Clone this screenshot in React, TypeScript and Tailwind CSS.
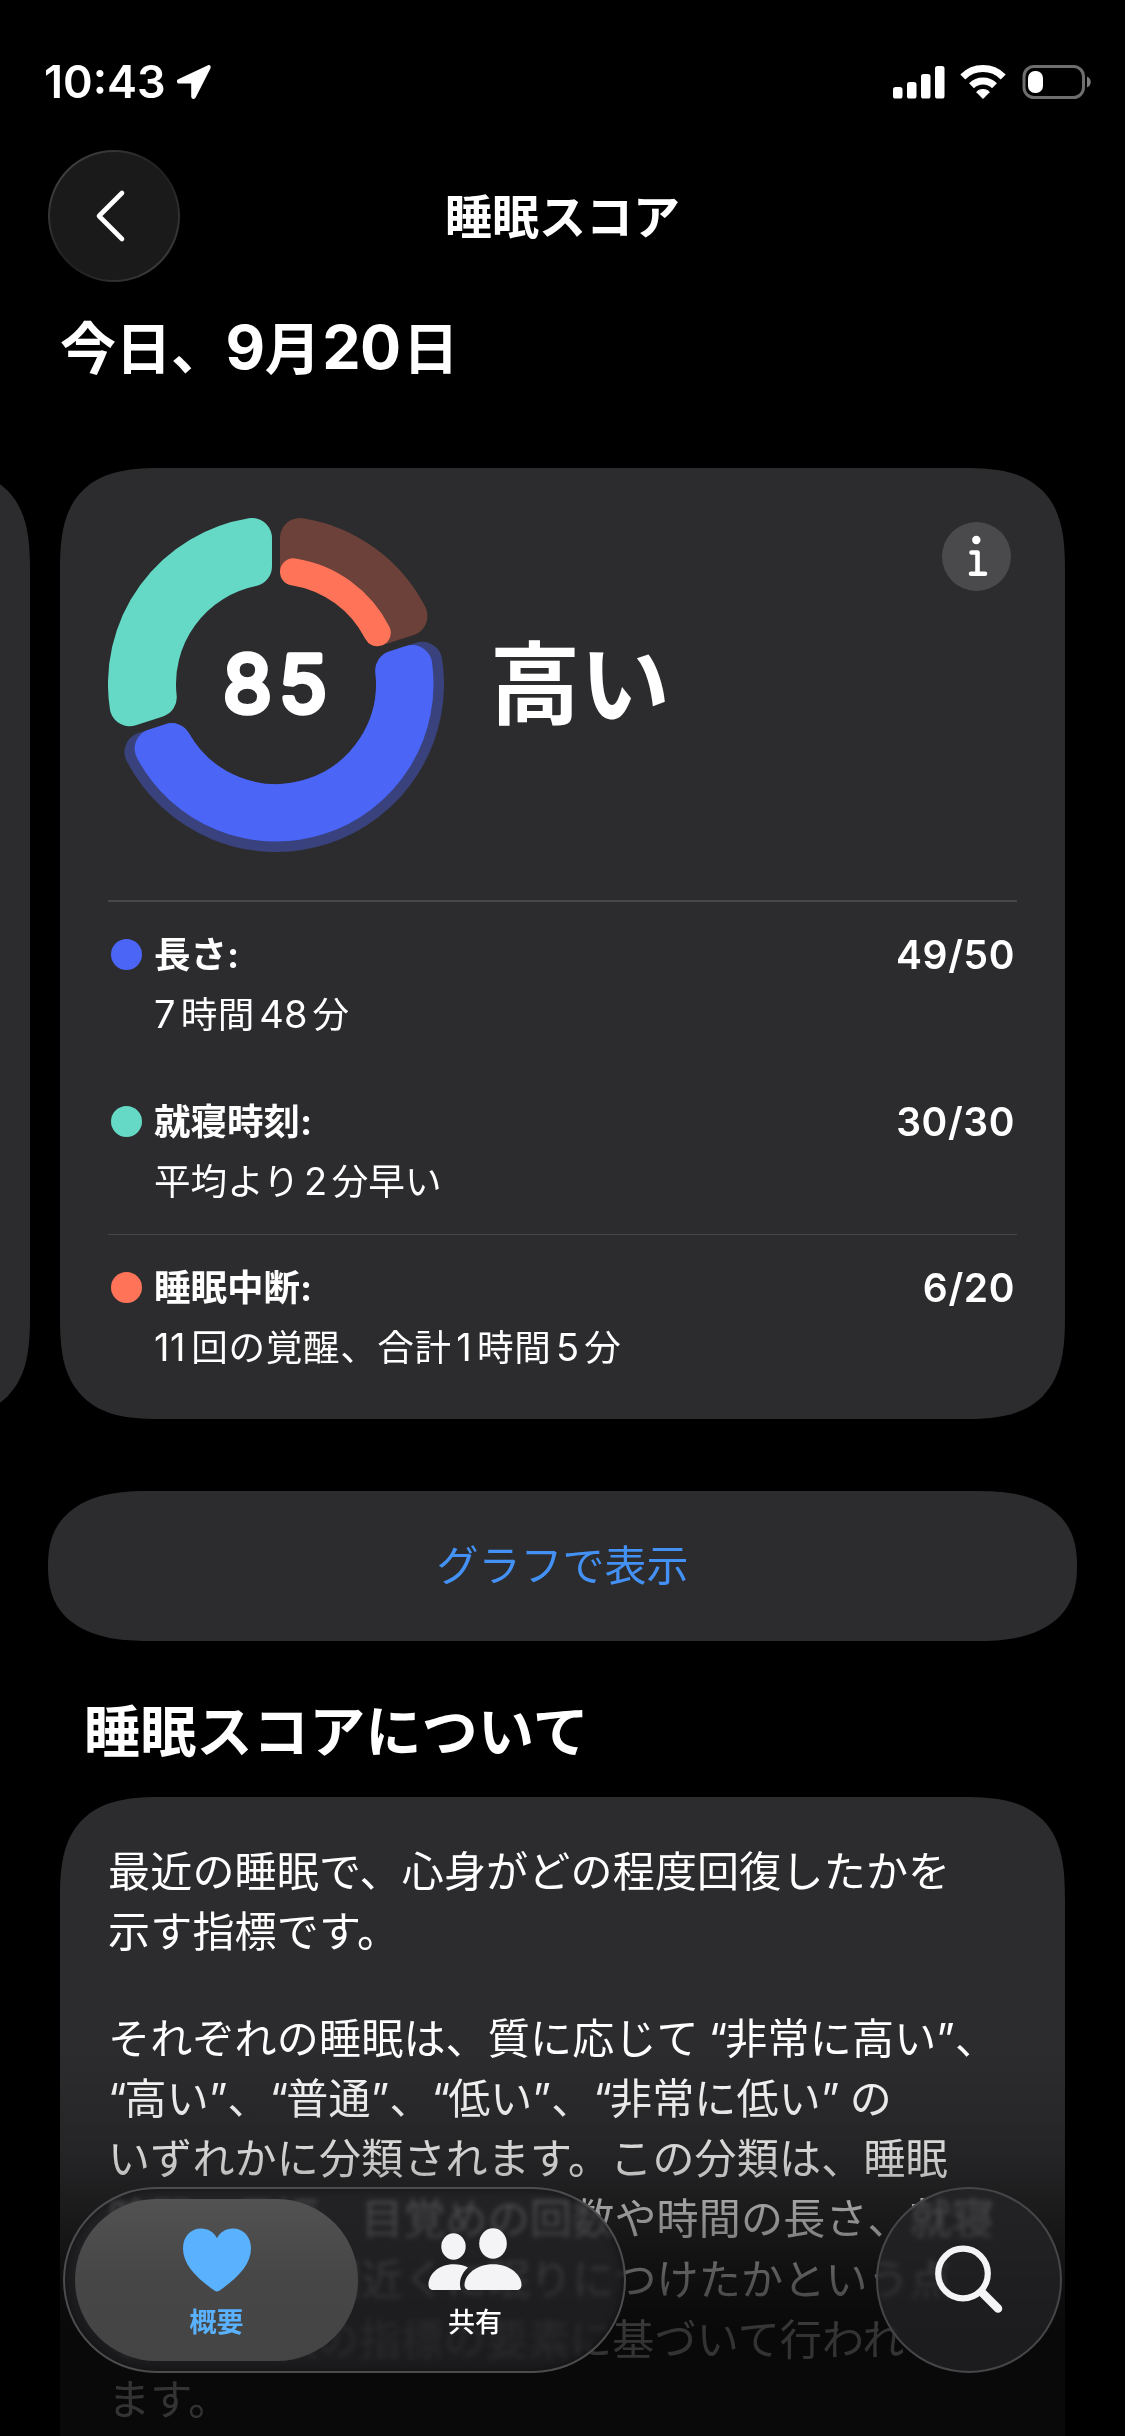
import type { ReactNode } from 'react';

const METRICS = [
  { color: 'bg-[#4b66f7]', title: '長さ:', score: '49/50', detail: <><Num first>7</Num>時間<Num>48</Num>分</> },
  { color: 'bg-[#65d9c5]', title: '就寝時刻:', score: '30/30', detail: <span className="tracking-normal">平均より<Num>2</Num>分早い</span> },
  { color: 'bg-[#ff7459]', title: '睡眠中断:', score: '6/20', detail: <span className="tracking-[0.65px]"><Num first>11</Num>回の覚醒、合計<Num>1</Num>時間<Num>5</Num>分</span> },
];

export default function App() {
  return (
    <div
      lang="ja"
      className="relative flex h-[2436px] w-[1125px] flex-col overflow-hidden bg-black font-['Inter','Noto_Sans_CJK_JP',sans-serif] text-white"
    >
      <StatusBar />
      <NavBar />
      <h2 className="mt-[29px] h-[72px] pl-[60px] text-[56px] leading-[72px] font-bold tracking-[-0.5px] whitespace-nowrap">
        今日、<span className="-ml-px text-[61px]">9</span>月<span className="mx-[2px] text-[61px]">20</span>日
      </h2>
      <Carousel />
      <button
        type="button"
        className="mx-[48px] mt-[72px] h-[150px] shrink-0 rounded-[75px] bg-[#2c2c2e] text-[42px] leading-[60px] text-[#4391f4] supports-[corner-shape:squircle]:rounded-[100px/75px] supports-[corner-shape:squircle]:[corner-shape:superellipse(1.3)]"
      >
        グラフで表示
      </button>
      <h2 className="mt-[55px] h-[72px] shrink-0 pl-[84px] text-[56px] leading-[72px] font-bold tracking-[0.3px]">睡眠スコアについて</h2>
      <About />
      <div className="absolute inset-x-0 top-[2050px] h-[386px] bg-[linear-gradient(to_bottom,transparent,rgba(0,0,0,0.17)_26%,rgba(0,0,0,0.43)_44%,rgba(0,0,0,0.67)_60%,rgba(0,0,0,0.8)_73%,rgba(0,0,0,0.8))]" />
      <TabBar />
    </div>
  );
}

function StatusBar() {
  return (
    <header className="flex h-[132px] shrink-0 items-start justify-between pt-[64px] pr-[33px] pl-[44px]">
      <div className="flex h-[36px] items-center gap-[11px]">
        <span className="w-[121px] text-[45px] leading-[36px] font-semibold">10:43</span>
        <svg width="36" height="36" viewBox="0 0 36 36" fill="white">
          <path d="M31.500 1.400 2.200 15.200C.2 16.200.7 19.500 3 19.500H15.200V32.400C15.200 35.200 18.600 35.800 19.700 33.500L34.400 4.400C35.500 2.200 33.700.4 31.500 1.400Z" />
        </svg>
      </div>
      <div className="flex h-[36px] items-center">
        <svg width="200" height="36" viewBox="892 64 200 36">
          <g fill="white">
            <rect x="893" y="87" width="9.500" height="11.500" rx="2.600" />
            <rect x="907" y="82" width="9.500" height="16.500" rx="2.600" />
            <rect x="921" y="74" width="9.500" height="24.500" rx="2.600" />
            <rect x="935" y="66" width="9.500" height="32.500" rx="2.600" />
            <path d="M983 98.500 976.600 92C979.800 88.600 986.200 88.600 989.400 92Z" stroke="white" strokeWidth="1" strokeLinejoin="round" />
          </g>
          <g fill="none" stroke="white" strokeWidth="7">
            <path d="M971.500 85.700A16.400 16.400 0 0 1 994.500 85.700" />
            <path d="M962.800 77A28.500 28.500 0 0 1 1003.200 77" />
          </g>
          <rect x="1024" y="66.500" width="59.500" height="31" rx="10" fill="none" stroke="#6e6e6e" strokeWidth="3" />
          <rect x="1028" y="71" width="15" height="22" rx="7" fill="white" />
          <path d="M1087 76.500C1092 78.500 1092 85.500 1087 87.500Z" fill="#7d7d7d" />
        </svg>
      </div>
    </header>
  );
}

function NavBar() {
  return (
    <nav className="mt-[18px] grid h-[132px] shrink-0 grid-cols-[132px_1fr_132px] items-center px-[48px]">
      <button
        type="button"
        aria-label="戻る"
        className="flex size-[132px] items-center justify-center rounded-full bg-[linear-gradient(135deg,#4a4a4a,#242424_45%,#202020_55%,#454545)] p-[2px]"
      >
        <span className="flex size-full items-center justify-center rounded-full bg-[#1a1a1a]">
          <svg width="40" height="60" viewBox="0 0 40 60" className="mr-[9px]" fill="none" stroke="white" strokeWidth="4.600" strokeLinecap="round" strokeLinejoin="round">
            <path d="M32 7 9 30 32 53" />
          </svg>
        </span>
      </button>
      <h1 className="pt-px text-center text-[47px] leading-[60px] font-bold">睡眠スコア</h1>
    </nav>
  );
}

function Carousel() {
  return (
    <div className="mt-[85px] -ml-[975px] flex h-[951px] w-[2040px] shrink-0 gap-[30px]">
      <section className="h-full w-[1005px] shrink-0 rounded-[76px] bg-[#2c2c2e] supports-[corner-shape:squircle]:rounded-[104px] supports-[corner-shape:squircle]:[corner-shape:superellipse(1.5)]" />
      <section className="flex h-full w-[1005px] shrink-0 flex-col rounded-[76px] bg-[#2c2c2e] px-[48px] supports-[corner-shape:squircle]:rounded-[104px] supports-[corner-shape:squircle]:[corner-shape:superellipse(1.5)]">
        <div className="flex h-[432px] shrink-0">
          <ScoreRing />
          <div className="flex flex-1 items-center pt-[2px] pl-[46px] text-[90px] leading-[100px] font-bold">高い</div>
          <InfoButton />
        </div>
        <div className="h-[2px] shrink-0 bg-[#47474a]" />
        <div className="flex h-[332px] shrink-0 flex-col">
          <MetricRow {...METRICS[0]} />
          <div className="h-[32px] shrink-0" />
          <MetricRow {...METRICS[1]} />
        </div>
        <div className="h-px shrink-0 bg-[#47474a]" />
        <MetricRow {...METRICS[2]} />
      </section>
    </div>
  );
}

function MetricRow({ color, title, score, detail }: { color: string; title: string; score: string; detail: ReactNode }) {
  return (
    <div className="flex shrink-0 items-start pt-[29px] pl-[3px]">
      <span className={`mt-[8px] mr-[12px] size-[31px] rounded-full ${color}`} />
      <div className="flex-1">
        <div className="h-[48px] text-[36.500px] leading-[48px] font-bold">{title}</div>
        <div className="mt-[11px] h-[47px] text-[36.600px] leading-[48px] tracking-[0.35px] whitespace-nowrap">{detail}</div>
      </div>
      <span className="mr-[2px] text-[39px] leading-[48px] font-semibold tracking-[0.6px]">{score}</span>
    </div>
  );
}

function Num({ children, first = false }: { children: ReactNode; first?: boolean }) {
  return <span className={first ? 'mr-[5px] text-[38px]' : 'mx-[4.500px] text-[38px]'}>{children}</span>;
}

function InfoButton() {
  return (
    <button type="button" aria-label="情報" className="mt-[54px] mr-[6px] flex size-[69px] items-center justify-center rounded-full bg-[#4a4a4c]">
      <svg width="69" height="69" viewBox="0 0 69 69" fill="none" stroke="white" strokeWidth="4.600" strokeLinecap="round" strokeLinejoin="round">
        <circle cx="34.300" cy="18" r="4.200" fill="white" stroke="none" />
        <path d="M29.500 30.500H35.500V51.500M29 51.700H43" />
      </svg>
    </button>
  );
}

interface Segment {
  from: number;
  to: number;
  inner: number;
  outer: number;
  corner: number;
  color: string;
}

const SEGMENTS: Segment[] = [
  { from: 0, to: 72, inner: 100, outer: 168, corner: 20, color: '#6b4139' },
  { from: 0, to: 72, inner: 100, outer: 127, corner: 13.4, color: '#ff7459' },
  { from: 72, to: 252, inner: 100, outer: 168, corner: 20, color: '#39427c' },
  { from: 72, to: 252, inner: 100, outer: 157.5, corner: 20, color: '#4b66f7' },
  { from: 252, to: 360, inner: 100, outer: 168, corner: 20, color: '#65d9c5' },
];

// The outline is inset by the corner radius; a round-joined stroke grows it back.
function segmentPath({ from, to, inner, outer, corner }: Segment) {
  const offset = 4 + corner;
  const rOut = outer - corner;
  const rIn = inner + corner;
  const point = (r: number, deg: number, sign: number) => {
    const a = (deg * Math.PI) / 180 + sign * Math.asin(offset / r);
    return `${(168 + r * Math.sin(a)).toFixed(2)} ${(168 - r * Math.cos(a)).toFixed(2)}`;
  };
  return [
    `M${point(rOut, from, 1)}`,
    `A${rOut} ${rOut} 0 0 1 ${point(rOut, to, -1)}`,
    `L${point(rIn, to, -1)}`,
    `A${rIn} ${rIn} 0 0 0 ${point(rIn, from, 1)}`,
    'Z',
  ].join('');
}

function ScoreRing() {
  return (
    <svg width="336" height="336" viewBox="0 0 336 336" className="mt-[48px] shrink-0">
      {SEGMENTS.map((segment) => (
        <path
          key={segment.color}
          d={segmentPath(segment)}
          fill={segment.color}
          stroke={segment.color}
          strokeWidth={segment.corner * 2}
          strokeLinejoin="round"
        />
      ))}
      <text
        x="170.500"
        y="196"
        textAnchor="middle"
        fill="white"
        stroke="white"
        strokeWidth="5.500"
        strokeLinejoin="round"
        fontSize="79"
        fontWeight="400"
        letterSpacing="7"
      >
        85
      </text>
    </svg>
  );
}

function Quoted({ children }: { children: ReactNode }) {
  return (
    <>
      <span className="tracking-[-2px]">“</span>
      {children}
      <span>”</span>
    </>
  );
}

function About() {
  return (
    <section className="mx-[60px] mt-[29px] h-[760px] shrink-0 rounded-t-[76px] bg-[#2c2c2e] pt-[45px] pl-[48px] text-[42px] leading-[60.250px] tracking-[0.2px] [word-spacing:-2px] whitespace-nowrap supports-[corner-shape:squircle]:rounded-t-[104px] supports-[corner-shape:squircle]:[corner-shape:superellipse(1.5)]">
      <p>
        最近の睡眠で、心身がどの程度回復したかを
        <br />
        示す指標です。
      </p>
      <p className="mt-[46px]">
        それぞれの睡眠は、質に応じて <Quoted>非常に高い</Quoted>、
        <br />
        <Quoted>高い</Quoted>、<Quoted>普通</Quoted>、<Quoted>低い</Quoted>、<Quoted>非常に低い</Quoted> の
        <br />
        いずれかに分類されます。この分類は、睡眠
        <br />
        時間の長短、目覚めの回数や時間の長さ、就寝
        <br />
        いつもの時刻近くに眠りにつけたかという点
        <br />
        など、複数の指標の要素に基づいて行われ
        <br />
        ます。
      </p>
    </section>
  );
}

function TabBar() {
  return (
    <div className="absolute inset-x-0 bottom-[63px] flex h-[186px] justify-between px-[63px]">
      <div className="flex h-full w-[563px] rounded-full border-2 border-[#4c4c4e] bg-[#232325]/75 p-[10px] shadow-[inset_0_0_10px_rgba(0,0,0,0.5)] backdrop-blur-[2.500px] backdrop-brightness-125">
        <div className="flex h-full w-[283px] flex-col items-center rounded-full bg-[linear-gradient(to_bottom,#525253,#474748_45%,#444445)] pt-[29px]">
          <svg width="70" height="64" viewBox="0 0 70 64" fill="#5ab2ff">
            <path d="M35 63.500C33.500 63.500 31.500 62 29.500 60.500C11.500 47.500 1 34.500 1 20.500C1 8.700 8.700.6 19 .6C26.500.6 32 4.500 35 10.200C38 4.500 43.500.6 51 .6C61.300.6 69 8.700 69 20.500C69 34.500 58.500 47.500 40.500 60.500C38.500 62 36.500 63.500 35 63.500Z" />
          </svg>
          <span className="mt-[11px] text-[27px] leading-[40px] font-bold text-[#5ab2ff]">概要</span>
        </div>
        <div className="flex flex-1 flex-col items-center pt-[29px] pr-[22px]">
          <svg width="94" height="64" viewBox="0 0 94 64" fill="#f4f4f6">
            <ellipse cx="25.500" cy="18.500" rx="12.200" ry="13.200" />
            <ellipse cx="65" cy="15.500" rx="13.800" ry="15.200" />
            <path d="M40 39.500C36 37.200 31 36.300 26 36.300C10 36.300.5 46.500.5 57C.5 60 2.500 62 5.500 62H33C30.500 55 32.500 46 40 39.500Z" />
            <path d="M65 36.300C48 36.300 36.500 47 36.500 57C36.500 60 38.500 62 41.500 62H88.500C91.500 62 93.500 60 93.500 57C93.500 47 82 36.300 65 36.300Z" />
          </svg>
          <span className="mt-[11px] text-[27px] leading-[40px] font-medium">共有</span>
        </div>
      </div>
      <button
        type="button"
        aria-label="検索"
        className="flex size-[186px] items-center justify-center rounded-full border-2 border-[#464648] bg-[#232325]/75 backdrop-blur-[2.500px] backdrop-brightness-125"
      >
        <svg width="70" height="70" viewBox="0 0 70 70" fill="none" stroke="#f4f4f6" strokeLinecap="round">
          <circle cx="29" cy="28.500" r="24.800" strokeWidth="6.200" />
          <path d="M47.500 47 64 63.500" strokeWidth="8.500" />
        </svg>
      </button>
    </div>
  );
}
